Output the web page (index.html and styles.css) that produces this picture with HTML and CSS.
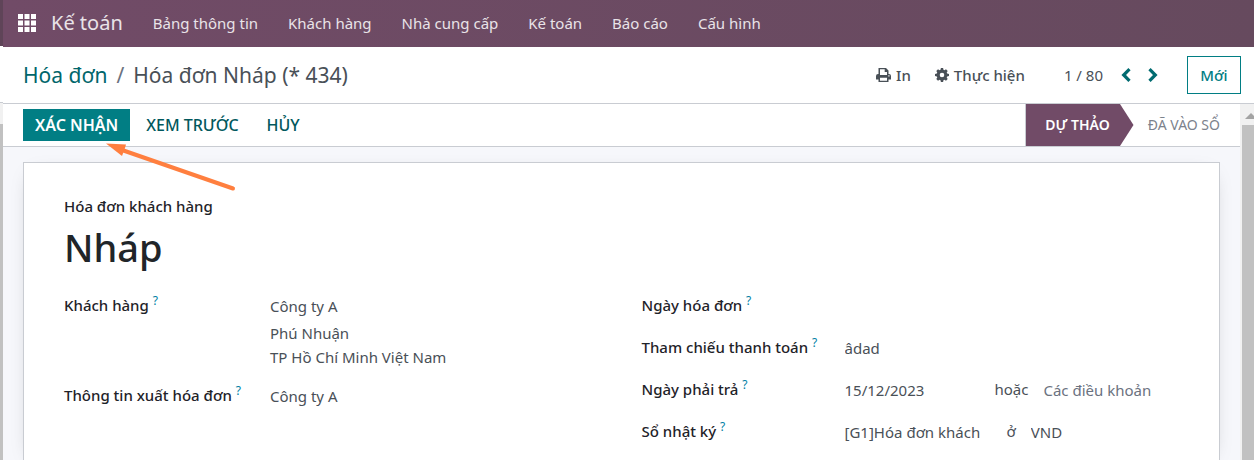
FILE: index.html
```html
<!DOCTYPE html>
<html lang="vi">
<head>
  <meta charset="UTF-8">
  <title>Hóa đơn Nháp (* 434)</title>
  <link rel="stylesheet" href="styles.css">
</head>
<body>

  <div class="edge">
    <div class="edge-nav"></div>
    <div class="edge-panel"></div>
    <div class="edge-track"></div>
    <div class="edge-thumb"></div>
  </div>

  <div class="app">
    <nav class="navbar">
      <button class="apps" aria-label="Ứng dụng">
        <svg width="18" height="18" viewBox="0 0 18 18" fill="#fff">
          <path d="M0 0h5v5H0zM6.500 0h5v5h-5zM13 0h5v5h-5zM0 6.500h5v5H0zM6.500 6.500h5v5h-5zM13 6.500h5v5h-5zM0 13h5v5H0zM6.500 13h5v5h-5zM13 13h5v5h-5z"/>
        </svg>
      </button>
      <a class="brand" href="#">Kế toán</a>
      <div class="menu">
        <a href="#">Bảng thông tin</a>
        <a href="#">Khách hàng</a>
        <a href="#">Nhà cung cấp</a>
        <a href="#">Kế toán</a>
        <a href="#">Báo cáo</a>
        <a href="#">Cấu hình</a>
      </div>
    </nav>

    <header class="control-panel">
      <div class="breadcrumb">
        <a href="#">Hóa đơn</a><span class="slash">/</span><span>Hóa đơn Nháp (* 434)</span>
      </div>
      <button class="tool print">
        <svg width="15" height="14" viewBox="0 0 15 14" fill="#495057">
          <path fill-rule="evenodd" d="M2.500 0h7.500L12.500 2.500V6H13a2 2 0 0 1 2 2v3.500h-2.500V14h-10v-2.500H0V8a2 2 0 0 1 2-2h.500zM4 1.300V7h7V4H8.700V1.300zM4 9.800v2.900h7V9.800zM12.300 7.300v1.200h1.200V7.300z"/>
        </svg>
        In
      </button>
      <button class="tool">
        <svg width="14" height="14" viewBox="0 0 14 14" fill="#495057">
          <path fill-rule="evenodd" d="M5.900 0h2.200l.35 1.750 1 .42L11 1.200 12.700 2.900l-.98 1.500.43 1.100L14 5.900v2.200l-1.850.4-.43 1 .98 1.600L11 12.800l-1.550-1-1 .45L8.100 14H5.900l-.4-1.750-1-.45-1.500 1L1.300 11.100l.95-1.600-.42-1L0 8.100V5.900l1.830-.4.42-1.100-.95-1.500L3 1.200l1.500.97 1-.42zM7 4.700a2.300 2.300 0 1 0 0 4.600 2.300 2.300 0 0 0 0-4.600z"/>
        </svg>
        Thực hiện
      </button>
      <span class="pager">1 / 80</span>
      <button class="arrow" aria-label="Trước">
        <svg width="10" height="14" viewBox="0 0 10 14" fill="none" stroke="#016b70" stroke-width="3.200"><path d="M8.500 1.200L2.700 7l5.800 5.800"/></svg>
      </button>
      <button class="arrow" aria-label="Sau">
        <svg width="10" height="14" viewBox="0 0 10 14" fill="none" stroke="#016b70" stroke-width="3.200"><path d="M1.500 1.200L7.300 7l-5.800 5.800"/></svg>
      </button>
      <button class="btn-new">Mới</button>
    </header>

    <div class="content">
      <main class="form-view">
        <div class="statusbar">
          <div class="confirm">
            <button class="btn btn-primary">XÁC NHẬN</button>
            <!-- Mũi tên chỉ vào nút xác nhận -->
            <svg class="pointer" width="130" height="50" viewBox="0 0 130 50">
              <path d="M16 7L127 45.500" stroke="#ff7f3f" stroke-width="4" stroke-linecap="round"/>
              <path d="M0 .500L20 1.500l-1.500 5-2.500 6.500z" fill="#ff7f3f"/>
            </svg>
          </div>
          <button class="btn">XEM TRƯỚC</button>
          <button class="btn">HỦY</button>
          <div class="states">
            <button class="state active">DỰ THẢO</button>
            <svg class="state-tip" width="14" height="42" viewBox="0 0 14 42"><path d="M0 0L13.500 21 0 42z" fill="#714b67"/></svg>
            <button class="state">ĐÃ VÀO SỔ</button>
          </div>
        </div>

        <div class="sheet-bg">
          <section class="sheet">
            <div class="doc-type">Hóa đơn khách hàng</div>
            <h1>Nháp</h1>

            <div class="groups">
              <div class="group group-left">
                <div class="field customer">
                  <label for="khach">Khách hàng <sup>?</sup></label>
                  <div>
                    <input type="text" id="khach" value="Công ty A">
                    <div class="address">Phú Nhuận<br>TP Hồ Chí Minh Việt Nam</div>
                  </div>
                </div>
                <div class="field">
                  <label for="xuat">Thông tin xuất hóa đơn <sup>?</sup></label>
                  <input type="text" id="xuat" value="Công ty A">
                </div>
              </div>

              <div class="group group-right">
                <div class="field">
                  <label for="ngay">Ngày hóa đơn <sup>?</sup></label>
                  <input type="text" id="ngay">
                </div>
                <div class="field">
                  <label for="thamchieu">Tham chiếu thanh toán <sup>?</sup></label>
                  <input type="text" id="thamchieu" value="âdad">
                </div>
                <div class="field">
                  <label for="phaitra">Ngày phải trả <sup>?</sup></label>
                  <div class="inline">
                    <input type="text" id="phaitra" class="w-date" value="15/12/2023">
                    <span>hoặc</span>
                    <input type="text" aria-label="Điều khoản" class="terms" placeholder="Các điều khoản">
                  </div>
                </div>
                <div class="field">
                  <label for="nhatky">Sổ nhật ký <sup>?</sup></label>
                  <div class="inline">
                    <input type="text" id="nhatky" class="w-journal" value="[G1]Hóa đơn khách hàng">
                    <span>ở</span>
                    <input type="text" aria-label="Tiền tệ" class="currency" value="VND">
                  </div>
                </div>
              </div>
            </div>
          </section>
        </div>
      </main>

      <div class="scrollbar">
        <svg width="12" height="6" viewBox="0 0 12 6"><path d="M0 6L6 0l6 6z" fill="#a3a3a3"/></svg>
        <div class="thumb"></div>
      </div>
    </div>
  </div>

</body>
</html>
```

FILE: styles.css
```css
* {
  box-sizing: border-box;
}

body {
  margin: 0;
  height: 100vh;
  display: flex;
  overflow: hidden;
  font-family: "Noto Sans", "Open Sans", sans-serif;
  font-size: 15px;
  line-height: 24px;
  color: #495057;
  background-color: white;
}

a {
  text-decoration: none;
  color: #01666b;
}

button, input {
  font: inherit;
  color: inherit;
  background: none;
  border: none;
  padding: 0;
}

button {
  cursor: pointer;
}

svg {
  display: block;
}

/* Mép cửa sổ bên trái */
.edge {
  width: 3px;
  flex: none;
  display: flex;
  flex-direction: column;
}

.edge-nav {
  height: 46px;
  background-color: #5f4458;
}

.edge-panel {
  height: 57px;
  border-bottom: 1px solid #c9ccd2;
}

.edge-track {
  height: 21px;
  background-color: #f1f1f1;
}

.edge-thumb {
  flex: 1;
  background-color: #c1c1c1;
}

.app {
  flex: 1;
  min-width: 0;
  display: flex;
  flex-direction: column;
}

.navbar {
  height: 47px;
  flex: none;
  display: flex;
  align-items: center;
  padding: 0 15px 2px;
  background: linear-gradient(90deg, #714b67, #664a5e);
}

.navbar a {
  color: #e9e3e8;
}

.navbar .brand {
  margin-left: 15px;
  font-size: 20px;
}

.menu {
  display: flex;
  gap: 30px;
  margin-left: 30px;
}

.control-panel {
  height: 57px;
  flex: none;
  display: flex;
  align-items: center;
  padding: 0 13px 0 20px;
  border-bottom: 1px solid #c9ccd2;
}

.breadcrumb {
  flex: 1;
  font-size: 21px;
}

.slash {
  margin: 0 9px;
  color: #6b7280;
}

.tool {
  display: flex;
  align-items: center;
  gap: 5px;
  font-weight: 500;
}

.print {
  margin-right: 24px;
}

.pager {
  margin: 0 18px 0 39px;
}

.arrow {
  margin-right: 17px;
}

.btn-new {
  width: 54px;
  height: 38px;
  margin-left: 12px;
  border: 1px solid #017e84;
  color: #017e84;
  font-weight: 500;
}

.content {
  flex: 1;
  min-height: 0;
  display: flex;
}

.form-view {
  flex: 1;
  min-width: 0;
  display: flex;
  flex-direction: column;
}

.statusbar {
  height: 43px;
  flex: none;
  display: flex;
  align-items: center;
  gap: 4px;
  padding-left: 20px;
  border-bottom: 1px solid #c9ccd2;
}

.confirm {
  position: relative;
}

.pointer {
  position: absolute;
  left: 83px;
  top: 34px;
  z-index: 1;
}

.btn {
  height: 32px;
  padding: 0 12px;
  font-size: 16px;
  font-weight: 500;
  color: #01585d;
}

.btn-primary {
  background-color: #017e84;
  color: white;
  font-weight: 600;
}

.states {
  display: flex;
  margin-left: auto;
  border-left: 1px solid #c9ccd2;
}

.state {
  height: 42px;
  padding: 0 20px 0 14px;
  font-size: 14px;
  color: #7c828c;
}

.state.active {
  padding: 0 10px 0 19px;
  background-color: #714b67;
  color: white;
  font-weight: 600;
}

.sheet-bg {
  flex: 1;
  min-height: 0;
  display: flex;
  padding: 15px 20px 0;
  background-color: #f6f7fb;
}

.sheet {
  flex: 1;
  min-width: 0;
  padding: 31px 40px 0;
  background-color: white;
  border: 1px solid #c9ccd2;
  border-bottom: none;
  box-shadow: 0 5px 20px -12px rgba(0, 0, 0, 0.4);
}

.doc-type {
  color: #1f2329;
  font-weight: 500;
}

h1 {
  margin: 0 0 17px;
  font-size: 38px;
  font-weight: 500;
  line-height: 58px;
  color: #212529;
}

.groups {
  display: grid;
  grid-template-columns: minmax(0, 1fr) minmax(0, 1fr);
  gap: 40px;
}

.field {
  display: grid;
  min-height: 42px;
}

.group-left .field {
  grid-template-columns: 206px 1fr;
}

.group-right .field {
  grid-template-columns: 203px 1fr;
}

.customer {
  min-height: 90px;
}

label {
  font-weight: 500;
  color: #1f2329;
}

sup {
  font-size: 12px;
  font-weight: 400;
  line-height: 0;
  color: #0180a5;
}

input {
  width: 100%;
  height: 24px;
  margin-top: 1px;
}

input::placeholder {
  color: #6b7280;
  opacity: 1;
}

.address {
  padding-top: 3px;
}

.inline {
  display: flex;
}

.w-date {
  width: 150px;
}

.w-journal {
  width: 135px;
  margin-right: 27px;
}

.terms {
  width: 150px;
  margin-left: 15px;
}

.currency {
  width: 100px;
  margin-left: 15px;
}

.scrollbar {
  width: 14px;
  flex: none;
  display: flex;
  flex-direction: column;
  overflow: hidden;
  padding: 9px 0 0 2px;
  background-color: #f1f1f1;
}

.scrollbar svg {
  flex: none;
  margin-left: 3px;
}

.thumb {
  flex: 1;
  margin-top: 6px;
  background-color: #c1c1c1;
}
```
